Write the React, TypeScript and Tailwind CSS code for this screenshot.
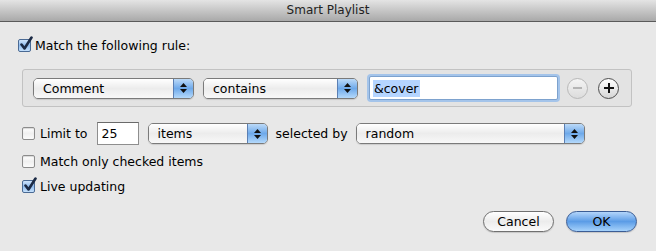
import React from "react";

function Checkbox({ checked }: { checked?: boolean }) {
  return (
    <div className="relative w-[13px] h-[13px] shrink-0">
      <div
        className={
          checked
            ? "w-[13px] h-[13px] rounded-[2px] border border-[#4a6a94] bg-gradient-to-b from-[#cfe4fb] via-[#8fbcef] to-[#c5e0fb]"
            : "w-[13px] h-[13px] rounded-[2px] border border-[#8c8c8c] bg-gradient-to-b from-[#ffffff] via-[#f0f0f0] to-[#fbfbfb] shadow-[inset_0_1px_1px_rgba(0,0,0,0.15)]"
        }
      />
      {checked && (
        <svg className="absolute left-[1px] top-[-3px]" width="14" height="15" viewBox="0 0 14 15">
          <path d="M2.5 8.5 L5.5 12.5 L12.5 1.5" fill="none" stroke="#1b2a45" strokeWidth="2.6" strokeLinecap="round" strokeLinejoin="round" />
        </svg>
      )}
    </div>
  );
}

function Popup({ label, width }: { label: string; width: string }) {
  return (
    <div className={`${width} h-[21px] flex rounded-[5px] border border-[#7a7a7a] overflow-hidden shadow-[0_1px_1px_rgba(0,0,0,0.12)]`}>
      <div className="flex-1 flex items-center pl-[9px] bg-gradient-to-b from-[#ffffff] via-[#ececec] to-[#f8f8f8]">
        {label}
      </div>
      <div className="w-[20px] border-l border-[#5b7fb3] flex flex-col items-center justify-center gap-[2px] bg-gradient-to-b from-[#bcdaf8] via-[#6ea9ea] to-[#b4d9fb]">
        <svg width="7" height="4" viewBox="0 0 7 4"><path d="M3.5 0 L7 4 L0 4 Z" fill="#111" /></svg>
        <svg width="7" height="4" viewBox="0 0 7 4"><path d="M0 0 L7 0 L3.5 4 Z" fill="#111" /></svg>
      </div>
    </div>
  );
}

export default function App() {
  return (
    <div className="w-[656px] h-[251px] bg-[#e8e8e8] text-[12.5px] leading-[15px] text-black font-['DejaVu_Sans',sans-serif] overflow-hidden flex flex-col">
      {/* Title bar */}
      <div className="h-[22px] shrink-0 bg-gradient-to-b from-[#e4e4e4] to-[#a9a9a9] border-b border-[#5a5a5a] flex items-center justify-center text-[12px] text-[#222]">
        Smart Playlist
      </div>

      <div className="flex items-center gap-[4px] ml-[18px] mt-[16px] h-[15px]">
        <Checkbox checked />
        <span>Match the following rule:</span>
      </div>

      {/* Rule box */}
      <div className="mt-[16px] ml-[22px] w-[610px] h-[38px] shrink-0 rounded-[3px] border border-[#c2c2c2] bg-[#e3e3e3] flex items-center pl-[10px] gap-[9px]">
        <Popup label="Comment" width="w-[161px]" />
        <Popup label="contains" width="w-[155px]" />
        <div className="ml-[2px] w-[189px] h-[24px] rounded-[2px] border border-[#7da2ce] shadow-[0_0_0_2px_#a4c4ea] bg-white flex items-center pl-[3px]">
          <span className="bg-[#b5d5ff] px-[1px] leading-[17px]">&amp;cover</span>
        </div>
        <div className="w-[21px] h-[21px] rounded-full border border-[#b8b8b8] bg-gradient-to-b from-[#f4f4f4] to-[#dcdcdc] flex items-center justify-center">
          <div className="w-[9px] h-[2px] bg-[#b4b4b4]" />
        </div>
        <div className="ml-[1px] w-[21px] h-[21px] rounded-full border border-[#4e4e4e] bg-gradient-to-b from-[#ffffff] to-[#d6d6d6] flex items-center justify-center relative">
          <div className="absolute w-[10px] h-[2px] bg-[#111]" />
          <div className="absolute w-[2px] h-[10px] bg-[#111]" />
        </div>
      </div>

      {/* Limit row */}
      <div className="mt-[15px] ml-[22px] flex items-center h-[23px] shrink-0">
        <Checkbox />
        <span className="ml-[5px]">Limit to</span>
        <div className="ml-[9px] w-[42px] h-[23px] bg-white border border-[#8e8e8e] border-t-[#6a6a6a] flex items-center pl-[4px]">
          25
        </div>
        <div className="ml-[9px]">
          <Popup label="items" width="w-[120px]" />
        </div>
        <span className="ml-[8px]">selected by</span>
        <div className="ml-[8px]">
          <Popup label="random" width="w-[229px]" />
        </div>
      </div>

      <div className="mt-[9px] ml-[22px] flex items-center gap-[5px] h-[15px]">
        <Checkbox />
        <span>Match only checked items</span>
      </div>

      <div className="mt-[10px] ml-[22px] flex items-center gap-[5px] h-[15px]">
        <Checkbox checked />
        <span>Live updating</span>
      </div>

      {/* Buttons */}
      <div className="mt-[17px] mr-[19px] flex justify-end gap-[12px]">
        <div className="w-[71px] h-[21px] rounded-full border border-[#707070] bg-gradient-to-b from-[#ffffff] via-[#ececec] to-[#fafafa] flex items-center justify-center shadow-[0_1px_1px_rgba(0,0,0,0.15)]">
          Cancel
        </div>
        <div className="w-[71px] h-[21px] rounded-full border border-[#3b5d95] bg-gradient-to-b from-[#b3d5fa] via-[#5b9ce6] to-[#a6d2fb] flex items-center justify-center shadow-[0_1px_1px_rgba(0,0,0,0.15)]">
          OK
        </div>
      </div>
    </div>
  );
}
